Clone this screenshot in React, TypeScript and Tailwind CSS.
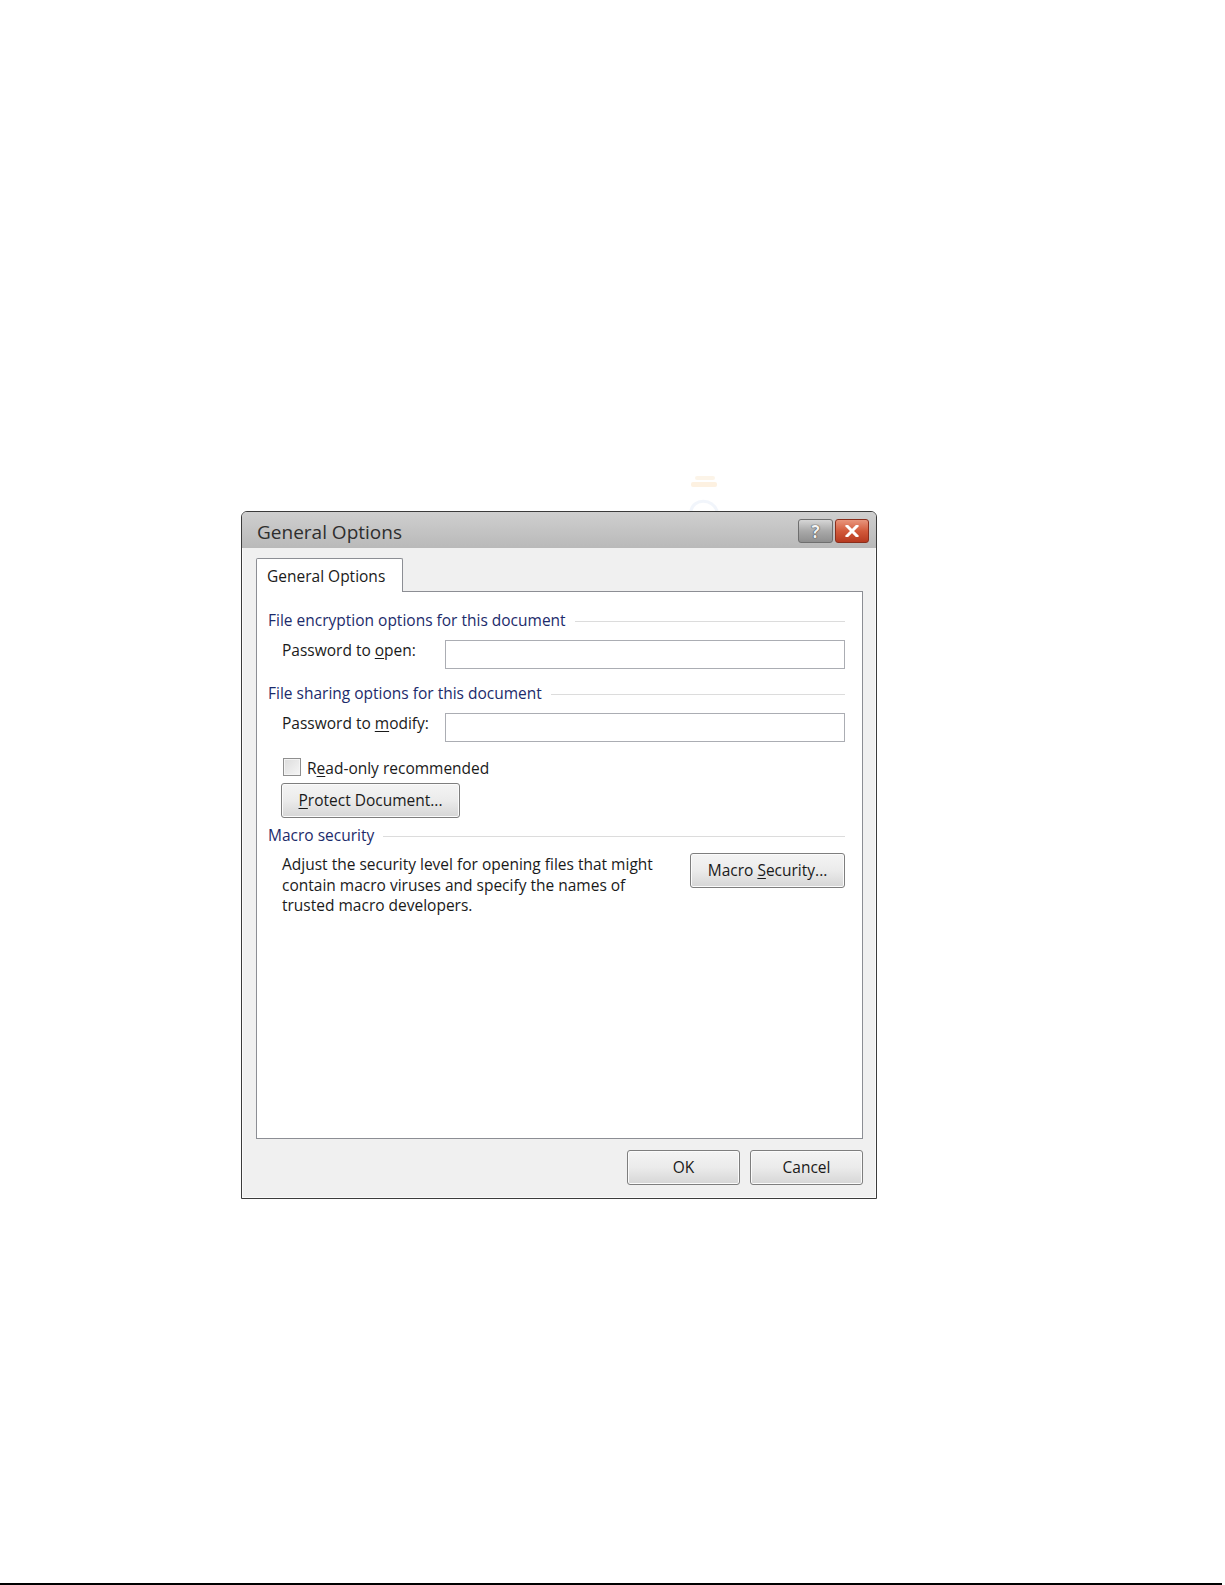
import React from "react";

const font = { fontFamily: '"Open Sans", "Noto Sans", "Liberation Sans", sans-serif' };

function Key({ children }: { children: React.ReactNode }) {
  return <span className="underline underline-offset-2">{children}</span>;
}

function GroupHeading({ label }: { label: string }) {
  return (
    <div className="flex h-[20px] items-center gap-[9px]">
      <span className="whitespace-nowrap text-[#1c2b6b]">{label}</span>
      <div className="h-px flex-1 bg-[#dcdcdc]" />
    </div>
  );
}

function WinButton({ children, className }: { children: React.ReactNode; className: string }) {
  return (
    <button
      className={
        "flex h-[35px] items-center justify-center rounded-[3px] border border-[#7e7e7e] bg-gradient-to-b from-[#f4f4f4] via-[#ebebeb] to-[#d6d6d6] text-[#1a1a1a] shadow-[inset_0_0_0_1px_#fbfbfb] " +
        className
      }
    >
      {children}
    </button>
  );
}

export default function App() {
  return (
    <div className="flex h-[1585px] w-full flex-col bg-white text-[15.5px] text-[#1a1a1a]" style={font}>
      {/* faint watermark above the dialog */}
      <div className="h-[511px] pl-[683px] pt-[470px]">
        <svg width="45" height="41" viewBox="0 0 45 41" className="opacity-25">
          <rect x="12" y="6" width="20" height="4" rx="2" fill="#f6d7a8" />
          <rect x="8" y="12" width="26" height="5" rx="2" fill="#f9c98b" />
          <path d="M8 41 C10 28 30 28 34 41" stroke="#c9d8f0" strokeWidth="3" fill="none" />
        </svg>
      </div>

      {/* dialog */}
      <div className="ml-[241px] flex h-[688px] w-[636px] flex-col overflow-hidden rounded-t-[6px] border border-[#3b3b3b] bg-[#f0f0f0]">
        {/* title bar */}
        <div className="flex h-[36px] items-start bg-gradient-to-b from-[#cfcfcf] to-[#b9b9b9] pl-[15px] pr-[7px]">
          <span className="mt-[9px] text-[19px] leading-[22px] text-[#2e2e2e]">General Options</span>
          <div className="ml-auto mt-[7px] flex gap-[2px]">
            <div className="flex h-[24px] w-[35px] items-center justify-center rounded-[3px] border border-[#6f6f6f] bg-gradient-to-b from-[#d6d6d6] via-[#a9a9a9] to-[#8f8f8f]">
              <span className="text-[17px] font-bold leading-none text-[#f3f3f3] [text-shadow:0_0_1px_#333,0_0_1px_#333]">?</span>
            </div>
            <div className="flex h-[24px] w-[34px] items-center justify-center rounded-[3px] border border-[#8a2e1c] bg-gradient-to-b from-[#e8957c] via-[#d25a3b] to-[#b73a20]">
              <svg width="14" height="12" viewBox="0 0 14 12">
                <path d="M2 1 L12 11 M12 1 L2 11" stroke="#ffffff" strokeWidth="3" strokeLinecap="square" />
              </svg>
            </div>
          </div>
        </div>

        {/* body */}
        <div className="flex flex-1 flex-col border-x border-b border-[#fbfbfb] pl-[13px] pr-[12px]">
          {/* tab strip */}
          <div className="mt-[10px] flex h-[33px] items-end">
            <div className="relative z-10 -mb-px flex h-[34px] w-[147px] items-start rounded-t-[2px] border border-b-0 border-[#8c8e94] bg-white pl-[10px] pt-[7px]">
              <span className="leading-[20px]">General Options</span>
            </div>
          </div>

          {/* panel */}
          <div className="flex h-[548px] flex-col border border-[#8c8e94] bg-white pl-[11px] pr-[17px]">
            <div className="mt-[19px]">
              <GroupHeading label="File encryption options for this document" />
            </div>
            <div className="mt-[9px] flex h-[29px] items-center pl-[14px]">
              <span className="mb-[8px] w-[163px] whitespace-nowrap">
                Password to <Key>o</Key>pen:
              </span>
              <div className="h-[29px] flex-1 border border-[#abadb3] bg-white" />
            </div>

            <div className="mt-[15px]">
              <GroupHeading label="File sharing options for this document" />
            </div>
            <div className="mt-[9px] flex h-[29px] items-center pl-[14px]">
              <span className="mb-[8px] w-[163px] whitespace-nowrap">
                Password to <Key>m</Key>odify:
              </span>
              <div className="h-[29px] flex-1 border border-[#abadb3] bg-white" />
            </div>

            <div className="mt-[16px] flex h-[18px] items-center pl-[15px]">
              <div className="h-[18px] w-[18px] border border-[#8f8f8f] bg-gradient-to-br from-[#dcdcdc] to-[#f6f6f6] shadow-[inset_0_0_0_1px_#f4f4f4]" />
              <span className="ml-[6px] mt-[3px] whitespace-nowrap">
                R<Key>e</Key>ad-only recommended
              </span>
            </div>

            <div className="mt-[7px] pl-[13px]">
              <WinButton className="w-[179px]">
                <span>
                  <Key>P</Key>rotect Document...
                </span>
              </WinButton>
            </div>

            <div className="mt-[8px]">
              <GroupHeading label="Macro security" />
            </div>

            <div className="mt-[7px] flex items-start justify-between pl-[14px]">
              <p className="w-[392px] pt-px leading-[20.5px]">
                Adjust the security level for opening files that might contain macro viruses and specify the names of trusted macro developers.
              </p>
              <WinButton className="w-[155px]">
                <span>
                  Macro <Key>S</Key>ecurity...
                </span>
              </WinButton>
            </div>
          </div>

          {/* footer buttons */}
          <div className="mt-[11px] flex justify-end gap-[10px]">
            <WinButton className="w-[113px]">OK</WinButton>
            <WinButton className="w-[113px]">Cancel</WinButton>
          </div>
        </div>
      </div>

      <div className="mt-auto h-[2px] w-[1222px] bg-black" />
    </div>
  );
}
